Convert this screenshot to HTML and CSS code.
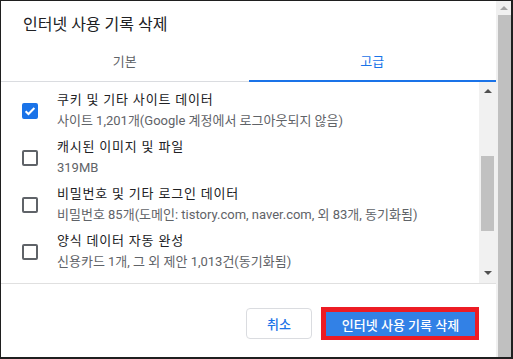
FILE: index.html
```html
<!DOCTYPE html>
<html lang="ko">
<head>
<meta charset="utf-8">
<link rel="stylesheet" href="styles.css">
</head>
<body>
<div class="frame">
  <div class="dialog">
    <div class="title">인터넷 사용 기록 삭제</div>
    <div class="tabs">
      <div class="tab">기본</div>
      <div class="tab active">고급</div>
    </div>
    <div class="content">
      <div class="list">
        <div class="row">
          <span class="cb checked"><svg width="16" height="16" viewBox="0 0 16 16"><path d="M3.6 8.2 L6.5 11 L12.4 5" fill="none" stroke="#fff" stroke-width="2"/></svg></span>
          <div class="text"><div class="label">쿠키 및 기타 사이트 데이터</div><div class="sub">사이트 1,201개(Google 계정에서 로그아웃되지 않음)</div></div>
        </div>
        <div class="row">
          <span class="cb"></span>
          <div class="text"><div class="label">캐시된 이미지 및 파일</div><div class="sub">319MB</div></div>
        </div>
        <div class="row">
          <span class="cb"></span>
          <div class="text"><div class="label">비밀번호 및 기타 로그인 데이터</div><div class="sub">비밀번호 85개(도메인: tistory.com, naver.com, 외 83개, 동기화됨)</div></div>
        </div>
        <div class="row last">
          <span class="cb"></span>
          <div class="text"><div class="label">양식 데이터 자동 완성</div><div class="sub">신용카드 1개, 그 외 제안 1,013건(동기화됨)</div></div>
        </div>
      </div>
      <div class="vscroll">
        <span class="arrow up"></span>
        <div class="track"><div class="thumb"></div></div>
        <span class="arrow down"></span>
      </div>
    </div>
    <div class="footer">
      <button class="btn cancel">취소</button>
      <button class="btn primary">인터넷 사용 기록 삭제</button>
    </div>
  </div>
  <div class="pagescroll">
    <span class="parrow"></span>
    <div class="pthumb"></div>
  </div>
</div>
</body>
</html>
```
FILE: styles.css
```css
* { box-sizing: border-box; }
html, body { margin: 0; padding: 0; background: #fff; }
body { font-family: Roboto, "Noto Sans CJK KR", sans-serif; }
.frame {
  width: 513px; height: 359px;
  border-style: solid; border-color: #1f1f1f;
  border-width: 1px 2px 2px 1px;
  display: flex;
  overflow: hidden;
}
.dialog { width: 495px; display: flex; flex-direction: column; background: #fff; }
.title {
  height: 39px; padding: 14px 0 0 22px;
  font-size: 16px; line-height: 20px; color: #202124;
}
.tabs {
  height: 42px; display: flex; border-bottom: 1px solid #dadce0;
}
.tab {
  flex: 1; text-align: center; position: relative;
  padding-top: 12px; font-size: 13px; line-height: 20px; color: #5f6368;
}
.tab.active { color: #1a73e8; }
.tab.active::after {
  content: ""; position: absolute; left: 0; right: 0; bottom: -1px; height: 2px; background: #1a73e8;
}
.content { height: 201px; display: flex; overflow: hidden; }
.list { flex: 1; padding-top: 5px; }
.row { display: flex; align-items: center; padding: 3px 0; }
.row.last { padding-bottom: 21px; }
.cb {
  width: 16px; height: 16px; margin-left: 21px; margin-right: 19px;
  border: 2px solid #5f6368; border-radius: 2px; flex: none; position: relative;
}
.cb.checked { background: #1a73e8; border-color: #1a73e8; }
.cb svg { position: absolute; left: -2px; top: -2px; }
.label { font-size: 13px; line-height: 20px; color: #202124; letter-spacing: 0.8px; }
.sub { font-size: 13px; line-height: 21px; color: #5f6368; }
.vscroll {
  width: 17px; background: #f1f1f1; display: flex; flex-direction: column; align-items: center;
}
.arrow { width: 0; height: 0; border-left: 4px solid transparent; border-right: 4px solid transparent; flex: none; }
.arrow.up { border-bottom: 4px solid #505050; margin-top: 7px; margin-bottom: 8px; }
.arrow.down { border-top: 4px solid #505050; margin-top: 8px; margin-bottom: 8px; }
.track { flex: 1; width: 100%; padding: 55px 2px 0 2px; }
.thumb { height: 75px; background: #c1c1c1; }
.footer {
  height: 74px; border-top: 1px solid #e0e0e0;
  display: flex; justify-content: flex-end; align-items: flex-start;
  padding: 23px 17px 0 0; gap: 9px;
}
.btn {
  font-family: Roboto, "Noto Sans CJK KR", sans-serif; font-size: 13px; font-weight: 500;
  margin: 0; cursor: pointer;
}
.cancel {
  width: 66px; height: 31px; margin-top: 1px;
  background: #fff; color: #1a73e8; border: 1px solid #dadce0; border-radius: 4px;
}
.primary {
  width: 158px; height: 33px;
  background: #3281e6; color: #fff;
  border-style: solid; border-color: #ed1c24; border-width: 5px 4px 4px 5px;
  padding: 0;
}
.pagescroll {
  width: 15px; background: #f0f0f0; display: flex; flex-direction: column; align-items: flex-end;
}
.parrow {
  width: 0; height: 0; align-self: center;
  border-left: 4px solid transparent; border-right: 4px solid transparent; border-bottom: 4px solid #a3a3a3;
  margin-top: 5px; margin-bottom: 5px;
}
.pthumb { width: 13px; flex: 1; background: #c0c0c0; }
```
